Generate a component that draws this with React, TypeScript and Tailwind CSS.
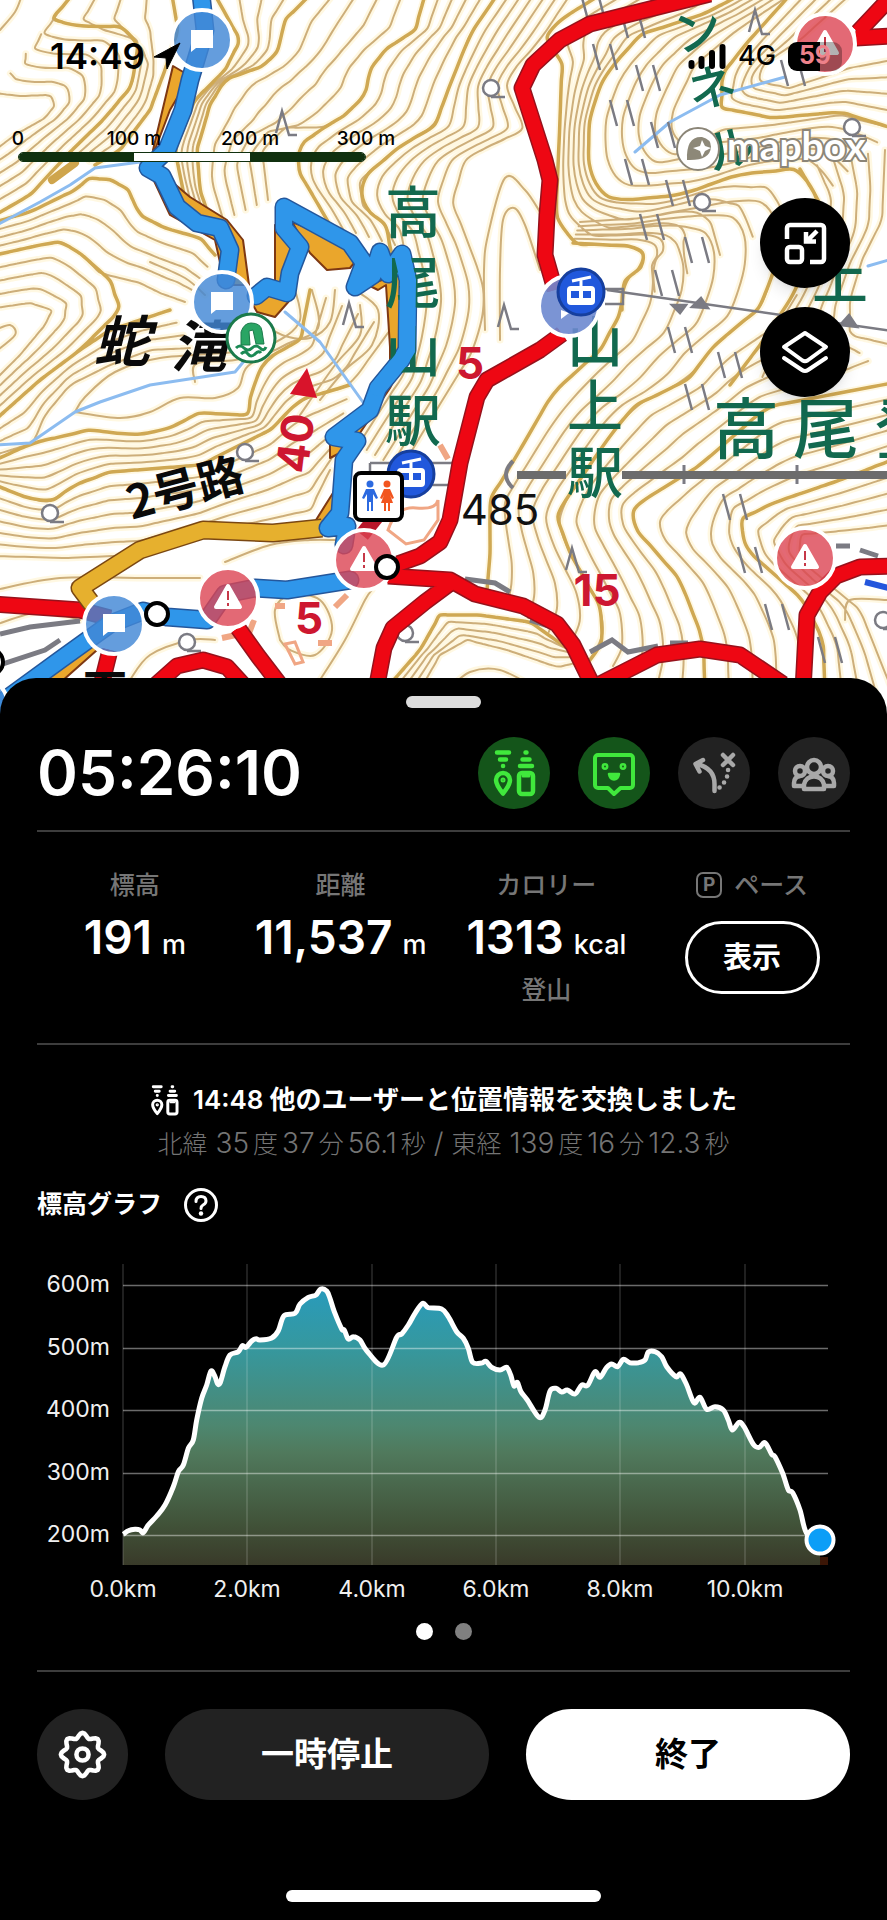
import React from 'react';

type Point = [number, number];

interface Ribbon {
  from: Point[];
  to: Point[];
  steps: number;
}

const GREEN = '#12694f';

// Contour guides. Each ribbon is filled with evenly spaced lines between its two edges.
const ribbons: Ribbon[] = [
  {
    from: [[600, -5], [560, 20], [545, 40], [562, 60], [560, 120], [557, 190], [556, 215], [573, 243], [640, 247], [646, 262], [623, 283], [622, 310]],
    to: [[740, -5], [706, 13], [640, 35], [605, 75], [590, 115], [588, 160], [600, 195], [625, 200], [680, 195], [740, 174], [800, 169], [818, 200]],
    steps: 6,
  },
  {
    from: [[740, -5], [706, 13], [640, 35], [605, 75], [590, 115], [588, 160], [600, 195], [625, 200], [680, 195], [740, 174], [800, 169], [818, 200]],
    to: [[790, -5], [737, 30], [695, 65], [673, 110], [672, 135], [690, 150], [720, 130], [773, 125], [840, 115], [892, 128]],
    steps: 5,
  },
  {
    from: [[790, -5], [745, 45], [722, 75], [722, 108], [773, 118], [840, 112], [892, 128]],
    to: [[850, -5], [800, 40], [762, 65], [760, 82], [790, 88], [850, 68], [892, 60]],
    steps: 4,
  },
  {
    from: [[573, 243], [640, 247], [646, 262], [623, 283], [622, 310], [600, 350], [553, 393], [517, 455], [490, 500], [490, 555], [487, 590]],
    to: [[580, 222], [640, 218], [740, 200], [772, 203], [778, 240], [773, 273], [760, 307], [715, 345], [687, 380], [633, 407], [607, 440], [557, 513], [567, 547], [600, 607], [603, 640], [590, 660]],
    steps: 5,
  },
  {
    from: [[773, 273], [760, 307], [715, 345], [687, 380], [633, 407], [607, 440], [557, 513], [567, 547], [600, 607], [603, 640], [590, 660]],
    to: [[892, 383], [767, 407], [700, 465], [633, 507], [637, 530], [680, 580], [703, 640], [705, 690]],
    steps: 5,
  },
  {
    from: [[892, 383], [767, 407], [700, 465], [633, 507], [637, 530], [680, 580], [703, 640], [705, 690]],
    to: [[892, 460], [840, 480], [773, 503], [740, 520], [747, 550], [803, 600], [823, 640], [825, 690]],
    steps: 5,
  },
  {
    from: [[892, 460], [840, 480], [773, 503], [740, 520], [747, 550], [803, 600], [823, 640], [825, 690]],
    to: [[892, 525], [850, 530], [800, 535], [800, 560], [860, 610], [892, 690]],
    steps: 4,
  },
  {
    from: [[800, 169], [818, 200], [815, 250], [790, 300], [760, 345], [730, 385]],
    to: [[885, 150], [882, 220], [862, 260], [850, 300], [850, 335], [892, 345]],
    steps: 5,
  },
  {
    from: [[310, -5], [285, 20], [278, 50], [265, 65], [225, 80], [210, 105], [197, 150], [200, 190], [212, 225]],
    to: [[425, -5], [415, 30], [385, 50], [370, 70], [365, 95], [345, 115], [325, 127], [285, 128], [262, 150], [268, 200]],
    steps: 5,
  },
  {
    from: [[425, -5], [415, 30], [385, 50], [370, 70], [365, 95], [345, 115], [325, 127], [300, 145], [298, 170], [330, 225]],
    to: [[497, -5], [470, 35], [450, 85], [435, 125], [395, 150], [360, 180], [362, 205], [385, 225], [395, 245]],
    steps: 5,
  },
  {
    from: [[497, -5], [470, 35], [450, 85], [435, 125], [395, 150], [362, 180], [362, 205], [385, 225], [400, 290], [395, 370], [350, 440]],
    to: [[570, -5], [540, 40], [505, 80], [523, 130], [467, 157], [452, 200], [467, 240], [483, 283], [483, 317], [473, 350], [400, 470]],
    steps: 6,
  },
  {
    from: [[215, -5], [240, 40], [225, 70], [195, 100], [175, 150], [185, 200]],
    to: [[310, -5], [285, 20], [278, 50], [265, 65], [225, 80], [210, 105], [197, 150], [200, 190], [212, 225]],
    steps: 4,
  },
  {
    from: [[72, -5], [52, 20], [80, 26], [120, 27], [138, 42], [132, 85], [105, 118], [72, 150], [30, 195], [-5, 215]],
    to: [[-5, 93], [20, 96], [50, 95], [55, 105], [45, 118], [15, 135], [-5, 150]],
    steps: 5,
  },
  {
    from: [[172, -5], [178, 30], [165, 70], [150, 110], [120, 150], [95, 165]],
    to: [[72, -5], [52, 20], [80, 26], [120, 27], [138, 42], [132, 85], [105, 118], [72, 150]],
    steps: 4,
  },
  {
    from: [[-5, 222], [30, 212], [75, 190], [90, 178], [112, 180], [128, 190], [140, 215], [165, 228], [200, 238], [215, 255]],
    to: [[-5, 255], [40, 245], [62, 242], [82, 255], [100, 273], [140, 283], [160, 293], [185, 302]],
    steps: 4,
  },
  {
    from: [[-5, 255], [40, 245], [62, 242], [82, 255], [110, 280], [120, 310], [80, 350], [40, 380], [-5, 420]],
    to: [[-5, 308], [30, 303], [52, 310], [45, 325], [20, 355], [-5, 380]],
    steps: 4,
  },
  {
    from: [[-5, 420], [40, 380], [80, 350], [110, 330], [170, 310]],
    to: [[-5, 455], [33, 443], [45, 415], [70, 385], [110, 365], [150, 350], [190, 348]],
    steps: 3,
  },
  {
    from: [[-5, 460], [33, 443], [90, 430], [133, 435], [165, 430], [200, 413], [247, 415], [252, 390], [265, 360], [300, 340], [310, 290]],
    to: [[-5, 485], [25, 497], [50, 502], [75, 485], [110, 472], [200, 465], [270, 430], [300, 400], [350, 385], [390, 330]],
    steps: 5,
  },
  {
    from: [[-5, 485], [25, 497], [50, 502], [75, 485], [110, 472], [200, 465], [270, 430], [300, 400], [350, 385]],
    to: [[-5, 556], [65, 558], [140, 555], [230, 528], [310, 510], [330, 470]],
    steps: 6,
  },
  {
    from: [[385, 690], [420, 650], [440, 615], [480, 615], [530, 622], [570, 650]],
    to: [[420, 690], [440, 655], [467, 640], [507, 650], [557, 667], [590, 660]],
    steps: 4,
  },
];

const looseContours: Point[][] = [
  [[485, 330], [484, 270], [488, 235], [505, 178], [525, 190], [540, 212]],
  [[500, 340], [500, 270], [503, 220], [514, 208], [525, 225], [540, 270]],
  [[-5, 590], [60, 578], [140, 578], [200, 578]],
  [[225, 562], [270, 545], [310, 540], [335, 540]],
  [[-5, 352], [15, 335], [10, 325], [-5, 330]],
  [[130, 680], [150, 655], [190, 640], [215, 640]],
  [[280, 640], [275, 610], [290, 595], [320, 600], [332, 630], [315, 655], [290, 650], [280, 640]],
  [[320, 680], [345, 640], [365, 600], [372, 590]],
  [[-5, 625], [40, 612], [80, 620]],
  [[448, 690], [470, 672], [500, 670], [540, 690]],
  [[0, 30], [15, 12], [22, -5]],
  [[845, 620], [850, 600], [887, 600]],
  [[75, 412], [85, 397], [115, 372], [160, 358], [235, 352], [270, 345], [300, 320], [290, 275]],
  [[75, 412], [120, 418], [150, 412], [180, 398], [215, 398], [238, 388], [248, 366], [285, 345], [318, 328], [312, 290]],
  [[195, 382], [196, 364], [235, 360], [275, 350]],
  [[150, 262], [185, 278], [205, 295]],
  [[258, 322], [285, 336], [310, 338], [330, 322], [335, 290]],
  [[320, 400], [345, 370], [372, 345], [378, 310], [355, 290]],
  [[300, 415], [335, 365], [360, 335], [360, 305]],
];

const hatches: Point[] = [
  [593, 7], [633, 25], [605, 57], [648, 78], [622, 113], [663, 135], [637, 172], [678, 193], [652, 227],
  [697, 250], [667, 283], [680, 340], [730, 365], [697, 397], [735, 507], [750, 560], [777, 617], [830, 650], [793, 73],
];

const broadleaf: Point[] = [[491, 88], [852, 127], [702, 202], [245, 452], [50, 513], [187, 642], [405, 633], [883, 620]];
const conifers: Point[] = [[285, 123], [352, 315], [758, 22], [507, 317], [575, 560]];

const roads = [
  'M710-6 650 9 590 24 560 40 533 65 522 88 545 160 550 180 547 215 545 255 555 290',
  'M562 334 540 350 487 380 477 397 460 463 450 520 440 542 420 556 392 566',
  'M388 576 450 580 475 594 523 606 557 624 573 645 595 690',
  'M452 582 425 602 393 628 384 648 376 690',
  'M600 684 657 655 700 649 740 655 783 684',
  'M803 690 807 615 820 592 836 576 860 567 892 566',
  'M-6 604 80 610 110 618',
  'M238 628 258 656 284 690',
  'M150 690 177 666 203 660 227 667 248 690',
  'M110 650 100 690',
  'M858 32 892-4M856 38 892 36',
];

const trails = [
  'M201-6 205 30 190 80 183 110 167 150 148 168 162 176 177 207 197 223 220 228 230 250 226 280',
  'M256 296 267 287 287 293 290 273 300 247 284 228 284 207 350 243 364 263 355 287 373 275 380 252 388 274 402 254 408 280 407 350 401 360 378 388 370 410 334 437 357 441 344 460 340 513 328 528 347 526 344 545',
  'M350 580 287 590 255 588 225 594 207 620 167 617 143 611 110 624 60 660 -6 708',
];

// Elevation samples along the track, in thirds of a chart unit.
const samples: Point[] = [
  [370, 823], [385, 812], [405, 808], [420, 810], [430, 818], [445, 795], [470, 768], [495, 735], [520, 680], [535, 635],
  [550, 615], [565, 565], [580, 540], [590, 480], [605, 415], [620, 375], [633, 333], [645, 350], [652, 370], [660, 370],
  [675, 320], [690, 285], [715, 275], [727, 257], [738, 262], [755, 243], [768, 236], [780, 240], [815, 234], [835, 212],
  [852, 167], [885, 160], [900, 132], [925, 112], [948, 105], [962, 87], [980, 93], [990, 115], [1003, 155], [1025, 207],
  [1033, 210], [1045, 237], [1060, 230], [1080, 240], [1100, 272], [1150, 315], [1190, 232], [1205, 222], [1225, 195],
  [1245, 160], [1268, 130], [1285, 143], [1325, 147], [1345, 170], [1370, 215], [1390, 235], [1405, 265], [1418, 307],
  [1445, 309], [1458, 304], [1475, 322], [1500, 330], [1520, 322], [1532, 345], [1542, 378], [1552, 367], [1563, 395],
  [1582, 420], [1617, 472], [1635, 450], [1650, 393], [1668, 385], [1685, 396], [1702, 390], [1725, 402], [1745, 375],
  [1763, 376], [1785, 335], [1800, 352], [1820, 322], [1835, 312], [1853, 320], [1870, 298], [1890, 308], [1915, 308],
  [1935, 300], [1945, 276], [1965, 275], [1985, 290], [2000, 320], [2028, 350], [2042, 342], [2060, 375], [2082, 428],
  [2100, 412], [2120, 448], [2145, 440], [2170, 450], [2185, 480], [2197, 510], [2217, 487], [2232, 500], [2260, 553],
  [2278, 562], [2295, 548], [2315, 583], [2325, 590], [2348, 640], [2365, 690], [2378, 698], [2400, 750], [2420, 820],
  [2460, 840],
];

const resample = (points: Point[], count: number): Point[] => {
  const lengths = [0];
  for (let i = 1; i < points.length; i++) {
    lengths.push(lengths[i - 1] + Math.hypot(points[i][0] - points[i - 1][0], points[i][1] - points[i - 1][1]));
  }
  const total = lengths[lengths.length - 1];
  const result: Point[] = [];
  let seg = 1;
  for (let i = 0; i < count; i++) {
    const target = (total * i) / (count - 1);
    while (seg < points.length - 1 && lengths[seg] < target) seg++;
    const t = (target - lengths[seg - 1]) / (lengths[seg] - lengths[seg - 1]);
    const [ax, ay] = points[seg - 1];
    const [bx, by] = points[seg];
    result.push([ax + (bx - ax) * t, ay + (by - ay) * t]);
  }
  return result;
};

const smooth = (points: Point[]) => {
  let d = `M${points[0][0].toFixed(1)} ${points[0][1].toFixed(1)}`;
  for (let i = 0; i < points.length - 1; i++) {
    const p0 = points[i - 1] || points[i];
    const p1 = points[i];
    const p2 = points[i + 1];
    const p3 = points[i + 2] || p2;
    const c = [p1[0] + (p2[0] - p0[0]) / 6, p1[1] + (p2[1] - p0[1]) / 6, p2[0] - (p3[0] - p1[0]) / 6, p2[1] - (p3[1] - p1[1]) / 6, p2[0], p2[1]];
    d += `C${c.map((n) => n.toFixed(1)).join(' ')}`;
  }
  return d;
};

const indexLines: string[] = [];
const thinLines: string[] = looseContours.map(smooth);
ribbons.forEach(({ from, to, steps }) => {
  const a = resample(from, 26);
  const b = resample(to, 26);
  for (let s = 0; s <= steps; s++) {
    const t = s / steps;
    const line = a.map(([x, y], i): Point => [x + (b[i][0] - x) * t, y + (b[i][1] - y) * t]);
    (s === 0 ? indexLines : thinLines).push(smooth(line));
  }
});

const gearPath = (() => {
  const pts: Point[] = [];
  for (let i = 0; i < 64; i++) {
    const a = (i / 64) * Math.PI * 2 - Math.PI / 2;
    const r = 19 + 2.4 * Math.cos(((i % 8) / 8) * Math.PI * 2);
    pts.push([45 + r * Math.cos(a), 45 + r * Math.sin(a)]);
  }
  return `M${pts.map((p) => `${p[0].toFixed(2)} ${p[1].toFixed(2)}`).join('L')}Z`;
})();

const CommentPin = ({ x, y }: { x: number; y: number }) => (
  <g transform={`translate(${x} ${y})`}>
    <circle r="30" fill="#4287d6" fillOpacity="0.82" stroke="#fff" strokeWidth="4" />
    <path d="M-11-10h22v18h-17l-5 4z" fill="#fff" />
  </g>
);

const AlertPin = ({ x, y }: { x: number; y: number }) => (
  <g transform={`translate(${x} ${y})`}>
    <circle r="30" fill="#dc4453" fillOpacity="0.8" stroke="#fff" strokeWidth="4" />
    <path d="M0-12 12 9h-24z" fill="#fff" stroke="#fff" strokeWidth="4" strokeLinejoin="round" />
    <path d="M0-7v9M0 5v3" stroke="#c63848" strokeWidth="2" />
  </g>
);

const CablePin = ({ x, y }: { x: number; y: number }) => (
  <g transform={`translate(${x} ${y})`}>
    <circle r="23" fill="#2158dc" stroke="#163f9e" strokeWidth="3" />
    <path d="M-9-11 10-15M0-13v8" stroke="#fff" strokeWidth="3" fill="none" />
    <rect x="-14" y="-6" width="28" height="19" rx="4" fill="#fff" />
    <path d="M-10-1h8v7h-8zM2-1h8v7H2z" fill="#2158dc" />
  </g>
);

const MapView: React.FC = () => (
  <svg viewBox="0 0 887 740" className="block w-full bg-white" role="img" aria-label="地図">
    <g fill="none" strokeLinecap="round" strokeLinejoin="round">
      <path d={thinLines.concat(indexLines).join('')} stroke="#fff3cf" strokeOpacity="0.6" strokeWidth="7" />
      <path d={thinLines.join('')} stroke="#cdae7a" strokeWidth="2" />
      <path d={indexLines.join('')} stroke="#cfa853" strokeWidth="3.5" />
      <path d="M52 180 75 163" stroke="#cfa54c" strokeWidth="8" />
      <path
        d="M-5 226 40 202 70 185 95 168 140 162M635 152 670 122 720 95 785 77M-5 445 30 443 75 412 100 402 150 385 235 372 245 360M285 312 320 342 365 405M868 266 892 259"
        stroke="#8cbcf0"
        strokeWidth="3"
      />
    </g>

    <g stroke="#7b7b83" strokeWidth="2.5" fill="none">
      {hatches.map(([x, y]) => (
        <path key={`${x}-${y}`} d={`M${x - 12} ${y - 13}l7 26M${x + 5} ${y - 13}l7 26`} />
      ))}
      {broadleaf.map(([x, y]) => (
        <g key={`${x}-${y}`}>
          <circle cx={x} cy={y} r="8" fill="#fff" />
          <path d={`M${x} ${y + 9}h14`} />
        </g>
      ))}
      {conifers.map(([x, y]) => (
        <path key={`${x}-${y}`} d={`M${x - 9} ${y + 10}l6-22l7 24h8`} />
      ))}
      <path d="M607 290 892 331M605 289h18v15h-18" />
      <path d="M672 305h14l-6 8zM692 307l9-9 7 10zM840 325l9-10 8 12z" fill="#7b7b83" />
      <path d="M370 463h82M370 463v22h82" fill="#fff" />
      <path d="M513 461q-14 14 0 27" strokeWidth="4" />
      <path d="M684 465v19M797 465v19" strokeWidth="3" />
      <path d="M517 475h49M622 475h270" stroke="#6c6c6c" strokeWidth="8" />
      <path d="M0 634 30 627 80 621M0 665 45 650 60 640M465 579 495 583 510 592M530 620l25 8 15 20M590 652l22-12 16 12 30-6M670 643h18M836 546h14M860 550l18 6" strokeWidth="5" />
      <path d="M865 582 892 589" stroke="#2456dc" strokeWidth="6" />
    </g>

    <g fill="none" stroke="#f0a684" strokeWidth="3">
      <path d="M388 530q8-24 28-22t22-8v20l-14 20-18 4z" />
      <path d="M285 644l10-2 8 20-8 2z" />
      <path d="M275 606h10M318 643h14M222 638l14-3M335 607l12-12M440 445l8 14M254 620l-6 16" strokeWidth="6" />
    </g>

    <g fill="none" strokeLinejoin="round">
      <path d={roads.join('')} stroke="#96121c" strokeWidth="17" />
      <path d={roads.join('')} stroke="#ee0713" strokeWidth="14" />
      <path d="M378 515 362 535" stroke="#b7162a" strokeWidth="15" />
    </g>

    <g fill="#eaa62c" stroke="#7e3812" strokeWidth="2" strokeLinejoin="round">
      <path d="M173 66 153 150 158 170 190 197 227 220 243 240 249 285 225 285 215 240 170 215 148 168 170 110 190 76z" />
      <path d="M250 300 257 312 275 317 290 300 275 290z" />
      <path d="M275 225V282l18 2 10-36z" />
      <path d="M292 222 310 253 327 270 350 268 365 250z" />
      <path d="M368 285l10 5 8-5 4 62v25l-25 40-35 28v18l20-10 40-60 20-40V270z" />
      <path d="M338 485 316 520 322 534 344 532z" />
      <path d="M85 635 22 690h30l45-40z" />
    </g>
    <g fill="none" strokeLinejoin="round">
      <path d="M322 528 273 533 203 530 140 550 80 588 92 604" stroke="#7a4712" strokeWidth="19" />
      <path d="M322 528 273 533 203 530 140 550 80 588 92 604" stroke="#e6b02e" strokeWidth="16" />
      <path d={trails.join('')} stroke="#24579c" strokeWidth="19" strokeLinecap="round" />
      <path d={trails.join('')} stroke="#2f96ea" strokeWidth="16" strokeLinecap="round" />
    </g>

    <g
      className="font-['Noto_Sans_CJK_JP',sans-serif] font-medium"
      textAnchor="middle"
      dominantBaseline="central"
      fill={GREEN}
      fontSize="56"
    >
      <text x="413" y="208">高</text>
      <text x="413" y="278">尾</text>
      <text x="413" y="347">山</text>
      <text x="413" y="416">駅</text>
      <text x="595" y="337">山</text>
      <text x="595" y="401">上</text>
      <text x="595" y="468">駅</text>
      <g fontSize="48">
        <text x="697" y="27" transform="rotate(-14 697 27)">ン</text>
        <text x="711" y="84" transform="rotate(-14 711 84)">ネ</text>
        <text x="730" y="145" transform="rotate(-14 730 145)">ル</text>
      </g>
      <text x="840" y="273">上</text>
      <g fontSize="66">
        <text x="746" y="424">高</text>
        <text x="826" y="424">尾</text>
        <text x="908" y="424">登</text>
      </g>
      <g fill="#0a0a0a" className="font-bold">
        <text x="122" y="337" className="italic">蛇</text>
        <text x="199" y="342" className="italic">滝</text>
        <text x="184" y="485" fontSize="46" transform="rotate(-15 184 485)">2号路</text>
        <text x="105" y="688" fontSize="44">下</text>
      </g>
    </g>
    {/* redraw the trail over the vertical station name */}
    <path d="M402 254 408 280 407 350 401 360 378 388" fill="none" stroke="#2f96ea" strokeWidth="16" strokeLinecap="round" />

    <g className="font-['Inter',sans-serif] font-bold" textAnchor="middle" fill="#cd1730" fontSize="44">
      <text x="470" y="379">5</text>
      <text x="309" y="634">5</text>
      <text x="597" y="606">15</text>
      <text x="295" y="443" dominantBaseline="central" transform="rotate(-83 295 443)">40</text>
      <text x="500" y="525" fontSize="42" fill="#111" className="font-normal">485</text>
    </g>
    <path d="M307 368 290 394 317 398z" fill="#d8142b" />

    <CommentPin x={202} y={40} />
    <CommentPin x={222} y={302} />
    <CommentPin x={114} y={624} />
    <CommentPin x={-22} y={706} />
    <circle cx="-10" cy="662" r="13" fill="#fff" stroke="#000" strokeWidth="4" />
    <g transform="translate(251 338)">
      <circle r="24" fill="#fff" stroke="#1b7a4b" strokeWidth="3" />
      <path d="M-10 7V-6q3-9 10-9 10 0 11 8l2 13H5L2-8-2-7-1 7z" fill="#2aa564" stroke="#1b7a4b" strokeWidth="1" />
      <path d="M-15 10q4-4 8 0t8 0 8 0 6-1M-10 16q4-4 7 0t7 0 6-1" fill="none" stroke="#1b8a55" strokeWidth="3" />
    </g>
    <circle cx="569" cy="306" r="30" fill="#6d88cf" fillOpacity="0.9" stroke="#fff" strokeWidth="4" />
    <path d="M561 310v9l8-6z" fill="#fff" />
    <CablePin x={581} y={292} />
    <CablePin x={411} y={474} />
    <AlertPin x={228} y={598} />
    <AlertPin x={364} y={560} />
    <AlertPin x={805} y={558} />
    <AlertPin x={825} y={44} />
    <circle cx="387" cy="567" r="11" fill="#fff" stroke="#000" strokeWidth="4" />
    <circle cx="157" cy="614" r="11" fill="#fff" stroke="#000" strokeWidth="4" />
    <g transform="translate(378 496)">
      <rect x="-23" y="-23" width="47" height="47" rx="6" fill="#fff" stroke="#000" strokeWidth="4" />
      <g fill="#2c6ae0">
        <circle cx="-8" cy="-12" r="3.5" />
        <path d="M-12-7h8l4 9-2 1-3-5v17h-2V6h-2v9h-2V-2l-3 5-2-1z" />
      </g>
      <g fill="#f2551f">
        <circle cx="9" cy="-12" r="3.5" />
        <path d="M6-7h6l4 9-2 1-2-4 3 8h-3v8h-2V7H8v8H6V7H3l3-8-2 4-2-1z" />
      </g>
    </g>
  </svg>
);

const MapOverlay: React.FC = () => (
  <div className="absolute inset-x-0 top-0 flex flex-col">
    <header className="mt-9 flex h-10 items-center justify-between pr-[45px] pl-[50px] text-black">
      <div className="flex items-center gap-2">
        <time className="text-[35px] font-semibold">14:49</time>
        <svg viewBox="0 0 28 28" className="size-7" aria-hidden="true">
          <path d="M27 1 1 15l12 1 1 11z" fill="#000" stroke="#000" strokeLinejoin="round" />
        </svg>
      </div>
      <div className="flex items-center gap-3">
        <svg viewBox="0 0 38 27" className="h-[27px] w-[38px]" aria-hidden="true">
          <path d="M3.500 20v3M13.500 16v7M24 10v13M34.500 4v19" stroke="#000" strokeWidth="6" strokeLinecap="round" />
        </svg>
        <span className="text-[27px] font-medium">4G</span>
        <span className="flex h-[29px] w-[54px] items-center justify-center rounded-[9px] bg-linear-to-r from-black from-59% to-black/30 to-59% text-[25px] font-bold text-[#ee828b]">
          59
        </span>
      </div>
    </header>

    <div className="mt-[50px] flex h-11 items-start justify-between pr-5">
      <div>
        <div className="-ml-10 flex text-[19px] leading-[26px] font-medium text-black">
          <span className="w-[116px] text-center">0</span>
          <span className="w-[116px] text-center">100 m</span>
          <span className="w-[116px] text-center">200 m</span>
          <span className="w-[116px] text-center">300 m</span>
        </div>
        <div className="ml-[18px] flex h-[10px] w-[348px] overflow-hidden rounded-full border border-[#10300f] bg-white">
          <span className="flex-1 bg-[#10300f]" />
          <span className="flex-1" />
          <span className="flex-1 bg-[#10300f]" />
        </div>
      </div>
      <svg viewBox="0 0 192 46" className="h-[46px] w-[192px]" role="img" aria-label="mapbox">
        <circle cx="23" cy="23" r="21" fill="#fff" stroke="#8b8577" strokeWidth="2" />
        <path d="M12 34q-1-24 15-23 9 2 9 10-1 14-24 13z" fill="#8d8878" />
        <path d="M27 14l3 6 6 2-6 3-3 6-2-6-7-3 7-2z" fill="#fff" />
        <text
          x="52"
          y="34"
          fontSize="39"
          className="font-['Lato',sans-serif] font-bold"
          fill="#fff"
          stroke="#8b8577"
          strokeWidth="4"
          paintOrder="stroke"
        >
          mapbox
        </text>
      </svg>
    </div>

    <div className="mt-7 flex flex-col items-end gap-[19px] pr-[37px]">
      <button type="button" aria-label="縮小" className="size-[90px] rounded-full bg-black shadow-lg">
        <svg viewBox="0 0 90 90" fill="none" stroke="#fff" strokeWidth="4.500">
          <path d="M27 41V30a3 3 0 0 1 3-3h31a3 3 0 0 1 3 3v31a3 3 0 0 1-3 3H50" />
          <rect x="27" y="49" width="15" height="15" rx="3" />
          <path d="M57 33 47 43M46 34v9.500h10" />
        </svg>
      </button>
      <button type="button" aria-label="レイヤー" className="size-[90px] rounded-full bg-black shadow-lg">
        <svg viewBox="0 0 90 90" fill="none" stroke="#fff" strokeWidth="4" strokeLinejoin="round" strokeLinecap="round">
          <path d="M45 26 66 40 47.500 53.500q-2.500 1.500-5 0L24 40z" />
          <path d="M24 51 42 63q3 2 6 0L66 51" />
        </svg>
      </button>
    </div>
  </div>
);

const ExchangeIcon = ({ className }: { className: string }) => (
  <svg viewBox="14 12 44 49" className={className} fill="none" stroke="currentColor" strokeWidth="4.500" strokeLinecap="round" aria-hidden="true">
    <path d="M19 15.500h12M22 22.500h6M25 29h.1M47.500 15.500h1M44.500 22.500h7M42 29h12" />
    <path d="M25 56.500q-7-8.500-7-13.500a7 7 0 0 1 14 0q0 5-7 13.500z" strokeLinejoin="round" />
    <circle cx="25" cy="43" r="1.500" strokeWidth="2" />
    <rect x="41" y="36" width="14" height="21" rx="3" />
    <path d="M45 39h6" strokeWidth="3" />
  </svg>
);

const ModeButtons: React.FC = () => (
  <div className="flex gap-7">
    <button type="button" aria-label="位置情報の交換" className="flex size-[72px] items-center justify-center rounded-full bg-[#14551a] text-[#40e83c]">
      <ExchangeIcon className="h-[49px] w-11" />
    </button>
    <button type="button" aria-label="見守り" className="size-[72px] rounded-full bg-[#14551a] text-[#40e83c]">
      <svg viewBox="0 0 72 72" fill="none" stroke="currentColor" strokeWidth="4" strokeLinejoin="round">
        <path d="M20 18h32a3 3 0 0 1 3 3v27a3 3 0 0 1-3 3h-9.500L36 57l-6-6H20a3 3 0 0 1-3-3V21a3 3 0 0 1 3-3z" />
        <circle cx="27" cy="29.500" r="2.200" strokeWidth="2.500" />
        <circle cx="45" cy="29.500" r="2.200" strokeWidth="2.500" />
        <path d="M31 37h10q-1 5.500-5 5.500t-5-5.500z" fill="currentColor" strokeWidth="2.500" />
      </svg>
    </button>
    <button type="button" aria-label="ルート外れ" className="size-[72px] rounded-full bg-[#222] text-[#a9a9a9]">
      <svg viewBox="0 0 72 72" fill="none" stroke="currentColor" strokeWidth="4.500" strokeLinecap="round" strokeLinejoin="round">
        <path d="M36.500 54V47q0-16-18-20M25 23l-7.500 4 4 7.500" />
        <path d="M45 18l10 10M55 18 45 28" />
        <path d="M50 33h.1M49 39.500h.1M46 45.500h.1M41.500 50.500h.1" />
      </svg>
    </button>
    <button type="button" aria-label="グループ" className="size-[72px] rounded-full bg-[#222] text-[#a9a9a9]">
      <svg viewBox="0 0 72 72" fill="none" stroke="currentColor" strokeWidth="4.500" strokeLinejoin="round">
        <circle cx="22" cy="34" r="5" />
        <circle cx="50" cy="34" r="5" />
        <path d="M25 49h-9v-3q0-6 6-7M47 49h9v-3q0-6-6-7" />
        <circle cx="36" cy="30" r="7" fill="#222" />
        <path d="M26 52v-4.500q2-8 10-8t10 8V52z" fill="#222" />
      </svg>
    </button>
  </div>
);

interface StatProps {
  label: string;
  value: string;
  unit: string;
  note?: string;
}

const Stat = ({ label, value, unit, note }: StatProps) => (
  <div className="flex flex-col items-center whitespace-nowrap">
    <dt className="text-[25px] leading-9 font-medium text-[#767676]">{label}</dt>
    <dd className="mt-[10px] flex h-12 items-baseline gap-[10px] text-[46px] leading-[48px] font-semibold">
      {value}
      <span className="text-[27px] leading-none font-medium">{unit}</span>
    </dd>
    {note && <dd className="mt-[11px] text-[25px] leading-9 font-medium text-[#767676]">{note}</dd>}
  </div>
);

interface AngleProps {
  name: string;
  deg: string;
  min: string;
  sec: string;
}

const Angle = ({ name, deg, min, sec }: AngleProps) => (
  <span className="flex items-baseline gap-1">
    <span className="mr-1">{name}</span>
    <span className="text-[28px]">{deg}</span>
    <span>度</span>
    <span className="text-[28px]">{min}</span>
    <span>分</span>
    <span className="text-[28px]">{sec}</span>
    <span>秒</span>
  </span>
);

const chartX = [123, 247, 372, 496, 620, 745];
const chartY = [30, 93, 155, 218, 280];

const ElevationChart: React.FC = () => {
  const line = smooth(samples.map(([x, y]): Point => [x / 3, y / 3 + 5]));

  return (
    <svg viewBox="0 0 887 350" className="mt-8 block w-full" role="img" aria-label="標高グラフ">
      <defs>
        <linearGradient id="elevation" x1="0" y1="30" x2="0" y2="310" gradientUnits="userSpaceOnUse">
          <stop offset="0" stopColor="#289bbd" />
          <stop offset="0.22" stopColor="#35989f" />
          <stop offset="0.5" stopColor="#4d8770" />
          <stop offset="0.6" stopColor="#50795c" />
          <stop offset="0.85" stopColor="#415339" />
          <stop offset="1" stopColor="#393a29" />
        </linearGradient>
      </defs>
      <path d={`${line}V310H123Z`} fill="url(#elevation)" />
      <path d="M820 302h8v8h-8z" fill="#3b1606" />
      {chartX.map((x) => (
        <path key={x} d={`M${x} 9V310`} stroke="#fff" strokeOpacity="0.17" strokeWidth="1.500" />
      ))}
      {chartY.map((y) => (
        <path key={y} d={`M123 ${y + 0.5}H828`} stroke="#fff" strokeOpacity="0.42" strokeWidth="1.500" />
      ))}
      <path d={line} fill="none" stroke="#fff" strokeWidth="5" strokeLinejoin="round" />
      <circle cx="820" cy="285" r="13.500" fill="#0c9ef7" stroke="#fff" strokeWidth="4" />
      <g fill="#f0f0f0" fontSize="23">
        {chartY.map((y, i) => (
          <text key={y} x="110" y={y + 7} textAnchor="end">{`${600 - i * 100}m`}</text>
        ))}
        {chartX.map((x, i) => (
          <text key={x} x={x} y="342" textAnchor="middle">{`${i * 2}.0km`}</text>
        ))}
      </g>
    </svg>
  );
};

const App: React.FC = () => {
  return (
    <main className="min-h-screen bg-black font-['Inter','Noto_Sans_CJK_JP',sans-serif] text-white">
      <div className="relative">
        <MapView />
        <MapOverlay />
      </div>

      <section className="relative -mt-[62px] flex flex-col rounded-t-[36px] bg-black pt-[18px] pb-[18px]">
        <div className="h-3 w-[75px] self-center rounded-full bg-[#dcdcdc]" />

        <div className="mx-[37px] mt-[29px] flex items-center justify-between border-b-2 border-[#3d3d3d] pb-[21px]">
          <time className="text-[62px] leading-[72px] font-semibold">05:26:10</time>
          <ModeButtons />
        </div>

        <dl className="grid grid-cols-4 px-8 pt-[35px] pb-[35px]">
          <Stat label="標高" value="191" unit="m" />
          <Stat label="距離" value="11,537" unit="m" />
          <Stat label="カロリー" value="1313" unit="kcal" note="登山" />
          <div className="flex flex-col items-center">
            <dt className="flex items-center gap-3 text-[25px] leading-9 font-medium text-[#767676]">
              <span className="flex size-[26px] items-center justify-center rounded-[7px] border-2 border-[#767676] text-[19px] font-bold">P</span>
              ペース
            </dt>
            <dd className="mt-[18px]">
              <button type="button" className="h-[73px] w-[135px] rounded-full border-[3px] border-white text-[29px] font-bold">
                表示
              </button>
            </dd>
          </div>
        </dl>

        <div className="mx-[37px] border-t-2 border-[#3d3d3d] pt-[37px]">
          <p className="flex items-center justify-center gap-[14px] text-[26px] leading-9 font-bold">
            <ExchangeIcon className="h-[33px] w-[29px]" />
            <span>
              <span className="font-semibold">14:48</span> 他のユーザーと位置情報を交換しました
            </span>
          </p>
          <p className="mt-[7px] flex h-9 items-baseline justify-center gap-2 text-[25px] leading-9 font-light text-[#747474]">
            <Angle name="北緯" deg="35" min="37" sec="56.1" />
            <span className="text-[28px]">/</span>
            <Angle name="東経" deg="139" min="16" sec="12.3" />
          </p>
          <div className="mt-[26px] flex h-9 items-center gap-[22px]">
            <h2 className="text-[25px] font-bold">標高グラフ</h2>
            <button type="button" aria-label="ヘルプ" className="size-[34px]">
              <svg viewBox="0 0 34 34" fill="none" stroke="#fff" strokeWidth="3">
                <circle cx="17" cy="17" r="15.500" />
                <path d="M12 13.500q0-5 5-5t5 4.500q0 2.500-3 4-2 1.200-2 3.500" strokeLinecap="round" />
                <circle cx="17" cy="25.500" r="2.200" fill="#fff" stroke="none" />
              </svg>
            </button>
          </div>
        </div>

        <ElevationChart />

        <div className="mt-[18px] flex justify-center gap-[22px]">
          <span className="size-[17px] rounded-full bg-white" />
          <span className="size-[17px] rounded-full bg-[#808080]" />
        </div>

        <div className="mx-[37px] mt-[30px] flex gap-[37px] border-t-2 border-[#3d3d3d] pt-[37px]">
          <button type="button" aria-label="設定" className="size-[91px] shrink-0 rounded-full bg-[#222]">
            <svg viewBox="0 0 90 90" fill="none" stroke="#fff" strokeWidth="4.500" strokeLinejoin="round">
              <path d={gearPath} />
              <circle cx="45" cy="45" r="6" />
            </svg>
          </button>
          <button type="button" className="h-[91px] flex-1 rounded-full bg-[#222] text-[33px] font-bold">
            一時停止
          </button>
          <button type="button" className="h-[91px] flex-1 rounded-full bg-white text-[33px] font-bold text-black">
            終了
          </button>
        </div>

        <div className="mt-[90px] h-3 w-[315px] self-center rounded-full bg-white" />
      </section>
    </main>
  );
};

export default App;
